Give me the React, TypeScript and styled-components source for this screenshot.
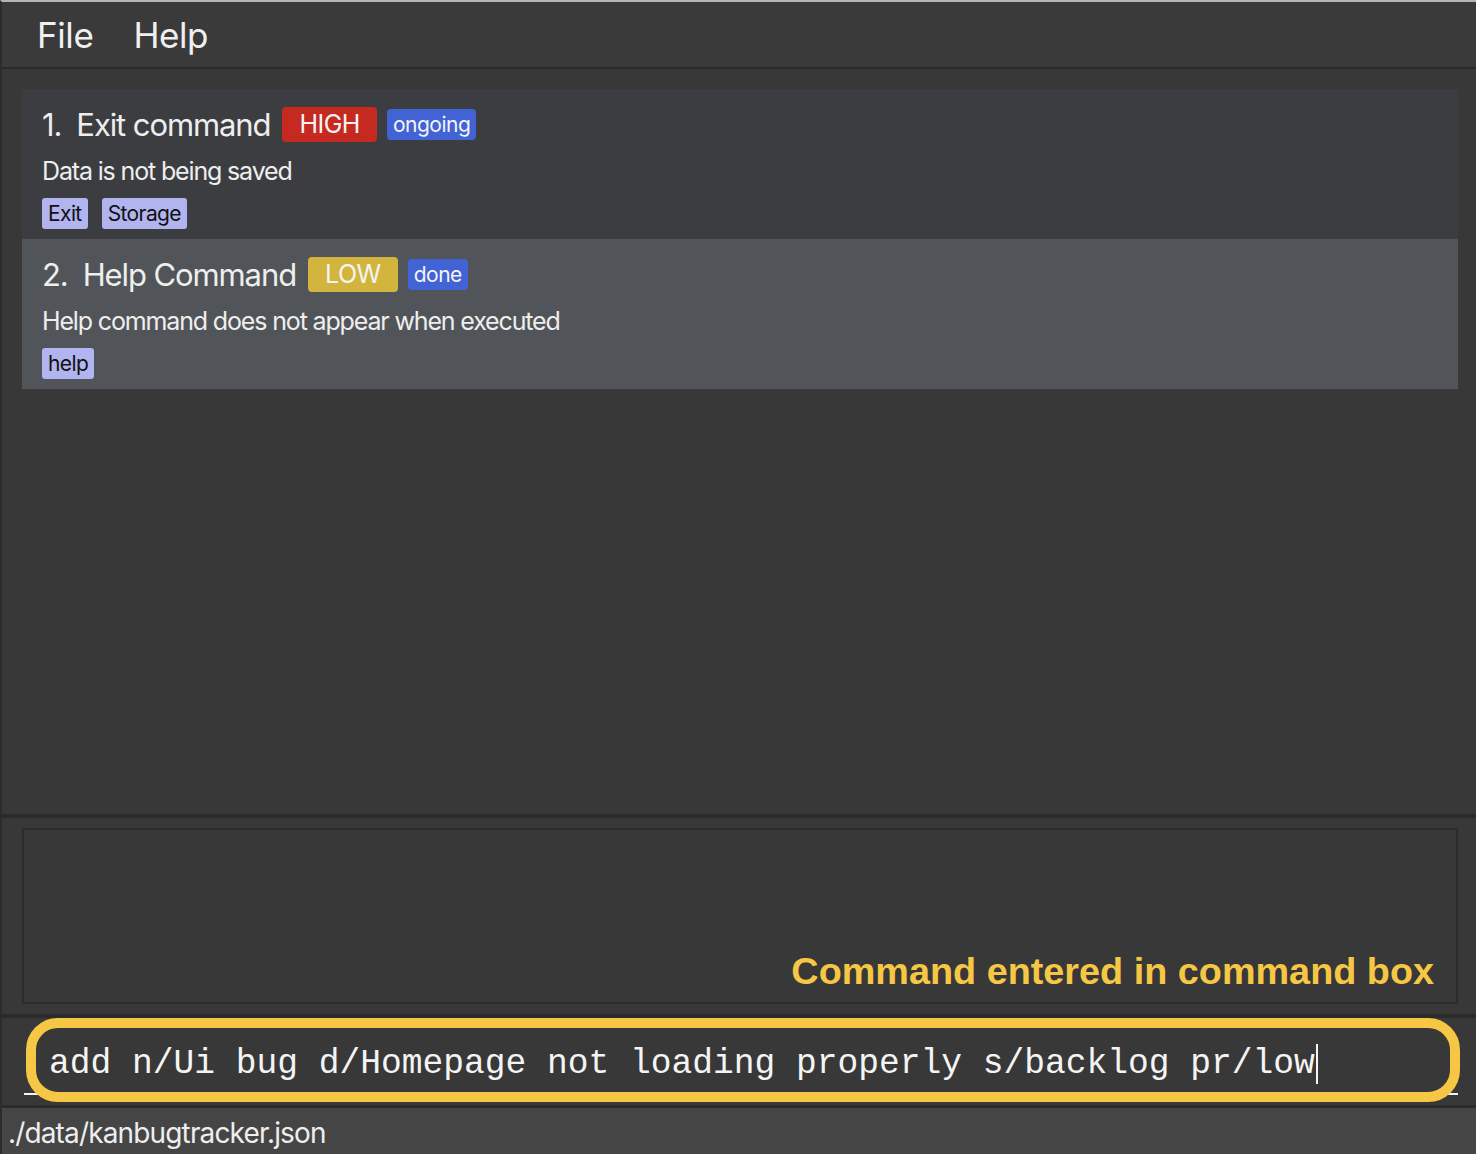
import React from "react";
import styled, { createGlobalStyle } from "styled-components";

const Global = createGlobalStyle`
  html, body { margin: 0; padding: 0; background: #383838; }
  * { box-sizing: border-box; }
`;

const Window = styled.div`
  width: 1476px;
  height: 1154px;
  display: flex;
  flex-direction: column;
  background: #383838;
  border-top: 2px solid #b4b4b4;
  border-left: 2px solid #2c2c2c;
  font-family: Inter, "Open Sans", sans-serif;
  color: #eeeeee;
  overflow: hidden;
`;

const MenuBar = styled.div`
  height: 67px;
  flex: none;
  display: flex;
  align-items: center;
  gap: 40px;
  padding-left: 35px;
  background: #3a3a3a;
  border-bottom: 2px solid #2a2a2a;
`;

const MenuItem = styled.span`
  font-size: 35px;
  letter-spacing: -0.4px;
  color: #f0f0f0;
`;

const ListPanel = styled.div`
  flex: 1;
  padding: 20px 18px 0 20px;
  border-bottom: 4px solid #2b2b2b;
`;

const Card = styled.div<{ $alt?: boolean }>`
  height: 150px;
  padding: 15px 20px 0 20px;
  background: ${(p) => (p.$alt ? "#515559" : "#3c3d40")};
  display: flex;
  flex-direction: column;
`;

const TitleRow = styled.div`
  display: flex;
  align-items: center;
  height: 40px;
`;

const Title = styled.span`
  font-size: 31px;
  letter-spacing: -1.1px;
  color: #eeeeee;
  margin-right: 12px;
`;

const Index = styled.span`
  margin-right: 15px;
`;

const Badge = styled.span<{ $bg: string; $big?: boolean }>`
  display: inline-flex;
  align-items: center;
  justify-content: center;
  background: ${(p) => p.$bg};
  color: #f4f4f4;
  border-radius: 4px;
  height: ${(p) => (p.$big ? "35px" : "31px")};
  padding: ${(p) => (p.$big ? "0 17px" : "0 6px")};
  font-size: ${(p) => (p.$big ? "25px" : "21px")};
  letter-spacing: -0.5px;
  margin-right: 10px;
`;

const Desc = styled.div`
  margin-top: 11px;
  font-size: 25px;
  letter-spacing: -1.15px;
  color: #eeeeee;
  height: 32px;
  line-height: 32px;
`;

const TagRow = styled.div`
  display: flex;
  gap: 14px;
  margin-top: 11px;
`;

const Tag = styled.span`
  display: inline-flex;
  align-items: center;
  height: 31px;
  padding: 0 6px;
  background: #b1b4ef;
  color: #111111;
  border-radius: 3px;
  font-size: 21px;
  letter-spacing: -0.6px;
`;

const ResultSection = styled.div`
  flex: none;
  padding: 10px 18px 10px 20px;
  border-bottom: 4px solid #2b2b2b;
`;

const ResultBox = styled.div`
  height: 176px;
  border: 2px solid #2c2c2c;
  background: #383838;
  display: flex;
  align-items: flex-end;
  justify-content: flex-end;
  padding: 0 22px 9px 0;
`;

const Annotation = styled.span`
  font-family: "Liberation Sans", Arial, sans-serif;
  font-weight: 700;
  font-size: 37.8px;
  color: #f6c744;
`;

const CommandSection = styled.div`
  flex: none;
  height: 90px;
  padding: 0 18px 0 22px;
  position: relative;
  border-bottom: 3px solid #2b2b2b;
`;

const CommandField = styled.div`
  height: 77px;
  border-bottom: 2px solid #f4f4f4;
  display: flex;
  align-items: center;
  padding: 16px 0 0 25px;
  font-family: "Liberation Mono", "Courier New", monospace;
  font-size: 34.6px;
  color: #f4f4f4;
  white-space: pre;
`;

const Caret = styled.span`
  display: inline-block;
  width: 2px;
  height: 40px;
  background: #f4f4f4;
  margin-left: 1px;
`;

const Highlight = styled.div`
  position: absolute;
  left: 24px;
  right: 16px;
  top: 0;
  height: 84px;
  border: 10px solid #f6c744;
  border-radius: 32px;
  pointer-events: none;
`;

const StatusBar = styled.div`
  flex: none;
  height: 46px;
  background: #454545;
  display: flex;
  align-items: center;
  padding: 4px 0 0 6px;
  font-size: 28px;
  letter-spacing: -0.85px;
  color: #eeeeee;
`;

const bugs = [
  {
    title: "Exit command",
    priority: "HIGH",
    priorityColor: "#c5291f",
    status: "ongoing",
    desc: "Data is not being saved",
    tags: ["Exit", "Storage"],
  },
  {
    title: "Help Command",
    priority: "LOW",
    priorityColor: "#d3b43d",
    status: "done",
    desc: "Help command does not appear when executed",
    tags: ["help"],
  },
];

export default function App() {
  return (
    <>
      <Global />
      <Window>
        <MenuBar>
          <MenuItem>File</MenuItem>
          <MenuItem>Help</MenuItem>
        </MenuBar>
        <ListPanel>
          {bugs.map((b, i) => (
            <Card key={b.title} $alt={i % 2 === 1}>
              <TitleRow>
                <Title>
                  <Index>{i + 1}.</Index>
                  {b.title}
                </Title>
                <Badge $bg={b.priorityColor} $big>
                  {b.priority}
                </Badge>
                <Badge $bg="#4263d6">{b.status}</Badge>
              </TitleRow>
              <Desc>{b.desc}</Desc>
              <TagRow>
                {b.tags.map((t) => (
                  <Tag key={t}>{t}</Tag>
                ))}
              </TagRow>
            </Card>
          ))}
        </ListPanel>
        <ResultSection>
          <ResultBox>
            <Annotation>Command entered in command box</Annotation>
          </ResultBox>
        </ResultSection>
        <CommandSection>
          <CommandField>
            add n/Ui bug d/Homepage not loading properly s/backlog pr/low
            <Caret />
          </CommandField>
          <Highlight />
        </CommandSection>
        <StatusBar>./data/kanbugtracker.json</StatusBar>
      </Window>
    </>
  );
}
